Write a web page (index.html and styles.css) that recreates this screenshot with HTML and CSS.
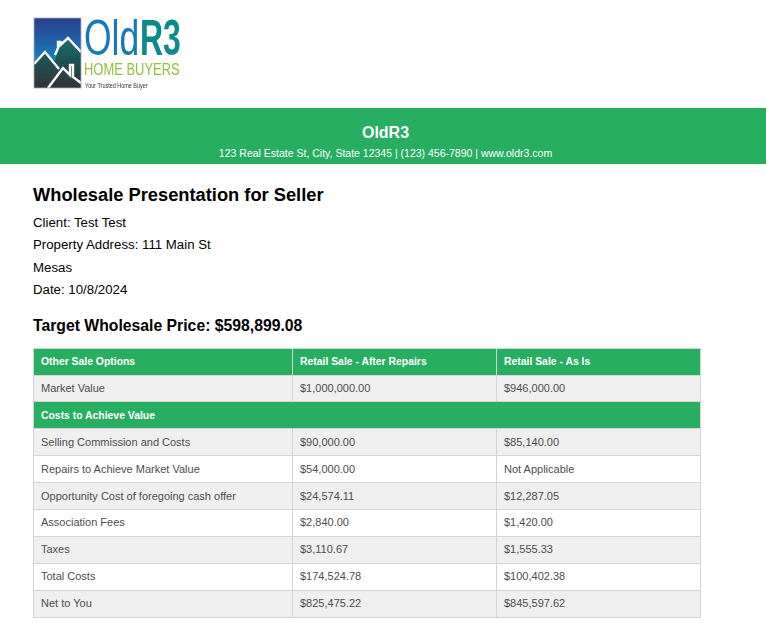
FILE: index.html
```html
<!DOCTYPE html>
<html lang="en">
<head>
<meta charset="utf-8">
<title>Wholesale Presentation for Seller</title>
<link rel="stylesheet" href="styles.css">
</head>
<body>
<div class="logo-row">
<svg class="logo" width="150" height="76" viewBox="0 0 150 76" role="img" aria-label="OldR3 Home Buyers">
<defs>
<linearGradient id="sky" x1="0" y1="0" x2="0" y2="1"><stop offset="0" stop-color="#2b3f8e"/><stop offset="0.35" stop-color="#1f62a8"/><stop offset="0.6" stop-color="#1685c0"/><stop offset="1" stop-color="#1b8ea8"/></linearGradient>
<linearGradient id="hill" x1="0" y1="0" x2="0" y2="1"><stop offset="0" stop-color="#1a6f70"/><stop offset="0.5" stop-color="#1f4f52"/><stop offset="1" stop-color="#333336"/></linearGradient>
<filter id="soft" x="-5%" y="-5%" width="110%" height="110%"><feGaussianBlur stdDeviation="0.5"/></filter>
</defs>
<g filter="url(#soft)">
<rect x="1" y="1" width="47" height="70" fill="url(#sky)"/>
<path d="M1 47 L12 35 L22 44 L25 31 V25 H27 V28 L35 21 L48 35 V71 H1Z" fill="url(#hill)"/>
<path d="M1 47 L12 35 L26 52 M22 38 L25 31 V25 H27.5 V28 L35 21 L48 35" fill="none" stroke="#fff" stroke-width="2.4"/>
<path d="M15 71 L30 51 L37 58 V48 H40 V60 L48 66" fill="none" stroke="#fff" stroke-width="2.4"/>
<rect x="1" y="1" width="47" height="70" fill="none" stroke="#a8acb4" stroke-width="0.8"/>
<text class="logo-old" transform="translate(51 38) scale(.71 1)">Old</text>
<text class="logo-r3" transform="translate(107 38) scale(.64 1)">R3</text>
<text class="logo-home" transform="translate(51 58) scale(.81 1)">HOME BUYERS</text>
<text class="logo-tag" transform="translate(52 71) scale(.72 1)">Your Trusted Home Buyer</text>
</g>
</svg>
</div>
<header class="banner">
<div class="banner-name">OldR3</div>
<div class="banner-contact">123 Real Estate St, City, State 12345 | (123) 456-7890 | www.oldr3.com</div>
</header>
<main class="content">
<h1 class="title">Wholesale Presentation for Seller</h1>
<p class="info">Client: Test Test</p>
<p class="info">Property Address: 111 Main St</p>
<p class="info">Mesas</p>
<p class="info">Date: 10/8/2024</p>
<h2 class="price">Target Wholesale Price: $598,899.08</h2>
<table class="options">
<colgroup><col class="col-a"><col class="col-b"><col class="col-c"></colgroup>
<tr class="head"><th>Other Sale Options</th><th>Retail Sale - After Repairs</th><th>Retail Sale - As Is</th></tr>
<tr class="alt"><td>Market Value</td><td>$1,000,000.00</td><td>$946,000.00</td></tr>
<tr class="head"><th colspan="3">Costs to Achieve Value</th></tr>
<tr class="alt"><td>Selling Commission and Costs</td><td>$90,000.00</td><td>$85,140.00</td></tr>
<tr><td>Repairs to Achieve Market Value</td><td>$54,000.00</td><td>Not Applicable</td></tr>
<tr class="alt"><td>Opportunity Cost of foregoing cash offer</td><td>$24,574.11</td><td>$12,287.05</td></tr>
<tr><td>Association Fees</td><td>$2,840.00</td><td>$1,420.00</td></tr>
<tr class="alt"><td>Taxes</td><td>$3,110.67</td><td>$1,555.33</td></tr>
<tr><td>Total Costs</td><td>$174,524.78</td><td>$100,402.38</td></tr>
<tr class="alt"><td>Net to You</td><td>$825,475.22</td><td>$845,597.62</td></tr>
</table>
</main>
</body>
</html>
```
FILE: styles.css
```css
* { box-sizing: border-box; }
html, body { margin: 0; padding: 0; background: #fff; }
body { font-family: "Liberation Sans", Arial, sans-serif; color: #000; overflow: hidden; height: 632px; }
.logo-row { height: 108px; padding: 17px 0 0 33px; }
.logo { display: block; }
.logo-old, .logo-r3 { font-family: "Liberation Sans", sans-serif; font-size: 50px; }
.logo-old { fill: #1279b8; }
.logo-r3 { fill: #0f8a8c; font-weight: 700; }
.logo-home { font-family: "Liberation Sans", sans-serif; font-size: 16px; fill: #95bf3c; }
.logo-tag { font-family: "Liberation Sans", sans-serif; font-size: 7.6px; fill: #333; }
.banner { height: 56px; background: #27ae60; color: #fff; text-align: center; padding: 15px 0 0 5px; }
.banner-name { font-size: 16px; font-weight: 700; line-height: 19px; }
.banner-contact { font-size: 10.5px; line-height: 13px; margin-top: 5px; }
.content { padding: 20px 33px 0; }
.title { margin: 0 0 6px; font-size: 18.3px; line-height: 22px; font-weight: 700; }
.info { margin: 0; font-size: 13.25px; line-height: 22.4px; }
.price { margin: 14px 0 12px; font-size: 15.75px; line-height: 20px; font-weight: 700; }
.options { width: 667px; table-layout: fixed; border-collapse: collapse; font-size: 11px; line-height: 13px; }
.col-a { width: 259px; }
.col-b { width: 204px; }
.col-c { width: 204px; }
.options th, .options td { height: 26.9px; padding: 0 7px; text-align: left; border: 1px solid #d4d4d4; }
.options td { color: #4d4d4d; }
.options th { background: #27ae60; color: #fff; font-size: 10.4px; font-weight: 700; }
.alt td { background: #efefef; }
```
